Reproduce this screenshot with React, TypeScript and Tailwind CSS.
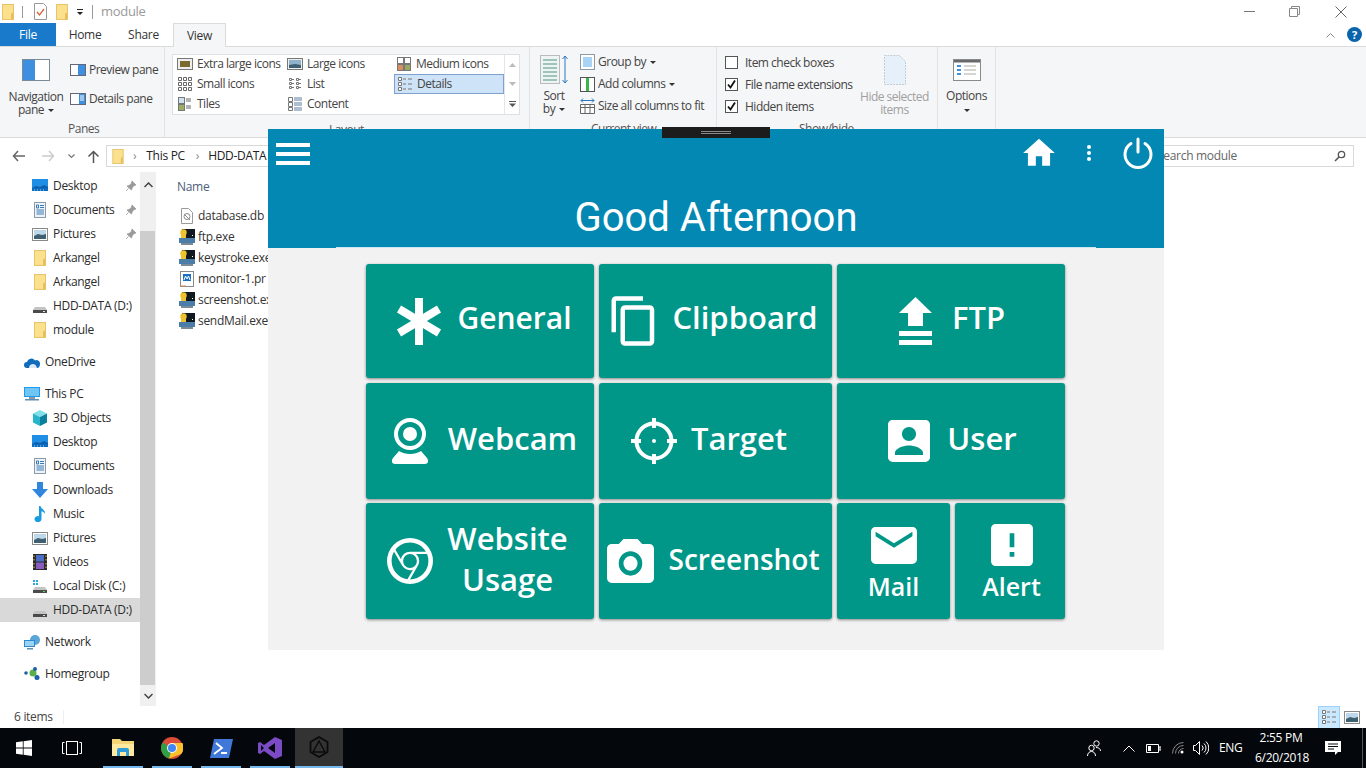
import React from "react";

const F = "[font-family:'Open_Sans','Noto_Sans',sans-serif]";

function Folder({ w = 12, h = 16 }: { w?: number; h?: number }) {
  return (
    <svg width={w} height={h} viewBox="0 0 12 16" className="shrink-0">
      <rect x="0.5" y="0.5" width="11" height="15" fill="#fbe08e" stroke="#e8c368" />
      <path d="M9 15V10l2-2v7z" fill="#e9bd58" />
    </svg>
  );
}
function Drive({ green = false }: { green?: boolean }) {
  return (
    <svg width="16" height="16" viewBox="0 0 16 16" className="shrink-0">
      {green && <path d="M1 2h2v2H1zM4 2h2v2H4zM1 5h2v2H1zM4 5h2v2H4z" fill="#27a3d8" />}
      <path d="M3 9h10l2 3H1z" fill="#c4c4c4" />
      <rect x="1" y="12" width="14" height="3" fill="#4a4a4a" />
      <rect x="11" y="13" width="2" height="1" fill={green ? "#5fd35f" : "#ddd"} />
    </svg>
  );
}
function Monitor() {
  return (
    <svg width="16" height="14" viewBox="0 0 16 14" className="shrink-0">
      <rect width="16" height="9" y="0" fill="#1f8fe6" />
      <path d="M0 9l4-2 4 1 4-2 4 2v1z" fill="#0d5ea8" />
      <rect y="9" width="16" height="3" fill="#0c6cc0" />
      <path d="M2 11h1M5 11h1M8 11h1M11 11h1" stroke="#9fd0f5" />
    </svg>
  );
}
function Doc() {
  return (
    <svg width="14" height="16" viewBox="0 0 14 16" className="shrink-0">
      <rect x="1.5" y="0.5" width="11" height="15" fill="#eef3f8" stroke="#8b9aa8" />
      <path d="M3.5 3h2v3h-2zM7 3.5h4M7 5.5h4M3.5 8h7.5M3.5 10h7.5M3.5 12h7.5" stroke="#3a7ab8" fill="none" />
    </svg>
  );
}
function Pics() {
  return (
    <svg width="16" height="13" viewBox="0 0 16 13" className="shrink-0">
      <rect x="0.5" y="0.5" width="15" height="12" fill="#fff" stroke="#8a8a8a" />
      <rect x="2" y="2" width="12" height="9" fill="#bcd8ea" />
      <path d="M2 8l4-2 4 1 4-1v5H2z" fill="#3f6070" />
    </svg>
  );
}
function Pin() {
  return (
    <svg width="12" height="12" viewBox="0 0 12 12">
      <path d="M7 1l4 4-2 .6-2 2.4-.5 2L2 6l2-.5L6.400 3.500z M3.500 8.500L1 11" fill="#9a9a9a" stroke="#9a9a9a" strokeWidth="0.8" />
    </svg>
  );
}
function Cube() {
  return (
    <svg width="16" height="16" viewBox="0 0 16 16" className="shrink-0">
      <path d="M8 0l7 3.500L8 7 1 3.500z" fill="#7fe0e8" />
      <path d="M1 3.500L8 7v9l-7-3.500z" fill="#26b5c9" />
      <path d="M15 3.500L8 7v9l7-3.500z" fill="#0c7f9c" />
    </svg>
  );
}
function Cloud() {
  return (
    <svg width="16" height="11" viewBox="0 0 16 11" className="shrink-0">
      <path d="M3 11a3 3 0 010-6 4.500 4.500 0 018-1.500A3.500 3.500 0 0116 7c0 2-1 4-3 4z" fill="#0f6cbd" />
      <path d="M5 11c0-3 2-4 4-4s3 1 4 4z" fill="#fff" opacity=".85" />
    </svg>
  );
}
function Pc() {
  return (
    <svg width="16" height="15" viewBox="0 0 16 15" className="shrink-0">
      <rect width="16" height="10" fill="#1f9cf0" />
      <rect x="1" y="1" width="14" height="8" fill="#6fc6f5" />
      <rect x="5" y="10" width="6" height="2" fill="#8a9aa6" />
      <rect x="1" y="12" width="14" height="1.500" fill="#5c8fb3" />
    </svg>
  );
}
function Down() {
  return (
    <svg width="16" height="16" viewBox="0 0 16 16" className="shrink-0">
      <path d="M5 0h6v7h5l-8 9-8-9h5z" fill="#2f86dc" />
    </svg>
  );
}
function Music() {
  return (
    <svg width="12" height="16" viewBox="0 0 12 16" className="shrink-0">
      <path d="M5 0h1.500c.5 3 5 3.500 4.500 8-1-2-2.500-2.500-3.500-2.800V13a3.500 3 0 11-2.500-2.800z" fill="#1a9be0" />
    </svg>
  );
}
function Video() {
  return (
    <svg width="14" height="16" viewBox="0 0 14 16" className="shrink-0">
      <rect width="14" height="16" fill="#2a2a2a" />
      <rect x="3" y="1" width="8" height="6.500" fill="#4b6fc6" />
      <rect x="3" y="8.500" width="8" height="6.500" fill="#8a5cc0" />
      <path d="M1 1.500v1.500M1 5v1.500M1 9v1.500M1 12.500v1.500M13 1.500v1.500M13 5v1.500M13 9v1.500M13 12.500v1.500" stroke="#d9c25a" />
    </svg>
  );
}
function Net() {
  return (
    <svg width="16" height="16" viewBox="0 0 16 16" className="shrink-0">
      <circle cx="11" cy="6" r="5" fill="#5aa5d8" />
      <rect x="0" y="6" width="11" height="7" fill="#2b8ad0" />
      <rect x="1" y="7" width="9" height="5" fill="#9bd3f3" />
      <rect x="3" y="14" width="6" height="1.500" fill="#5c8fb3" />
    </svg>
  );
}
function Home16() {
  return (
    <svg width="16" height="14" viewBox="0 0 16 14" className="shrink-0">
      <circle cx="2" cy="6" r="1.800" fill="#1a5fa8" />
      <circle cx="9" cy="6" r="3.500" fill="#5bb04a" />
      <circle cx="11" cy="2" r="2" fill="#1a5fa8" />
      <circle cx="13" cy="10.500" r="2.500" fill="#1a5fa8" />
    </svg>
  );
}
function DbIcon() {
  return (
    <svg width="14" height="16" viewBox="0 0 14 16" className="shrink-0">
      <path d="M1.500.5h7l4 4v11h-11z" fill="#fff" stroke="#9a9a9a" />
      <circle cx="7" cy="8.500" r="3" fill="none" stroke="#8a8a8a" />
      <path d="M4 6l6 6" stroke="#8a8a8a" />
    </svg>
  );
}
function Exe() {
  return (
    <svg width="16" height="16" viewBox="0 0 16 16" className="shrink-0">
      <rect x="3" y="0" width="13" height="10" fill="#101820" />
      <circle cx="4.500" cy="3.500" r="3.200" fill="#eec32e" />
      <rect x="2" y="4" width="5" height="5" fill="#eec32e" />
      <rect x="0" y="9" width="16" height="5" fill="#4a7ea8" />
      <rect x="2" y="14" width="12" height="2" fill="#7a8a96" />
      <path d="M13 6h1v1h-1z" fill="#fff" />
    </svg>
  );
}
function PrIcon() {
  return (
    <svg width="14" height="16" viewBox="0 0 14 16" className="shrink-0">
      <rect x="0.500" y="0.500" width="13" height="15" fill="#fff" stroke="#8a8a8a" />
      <rect x="3" y="3" width="8" height="7" fill="#1a6fc4" />
      <path d="M4 9l1.500-4L7 8l1.500-3L10 9" stroke="#fff" fill="none" />
      <path d="M0 15h6" stroke="#d08a60" />
    </svg>
  );
}

function NavRow({ icon, label, pin, sel, indent = 32, textX = 53, mt = 0 }: { icon: React.ReactNode; label: string; pin?: boolean; sel?: boolean; indent?: number; textX?: number; mt?: number }) {
  return (
    <div className={`relative flex h-6 items-center ${sel ? "bg-[#d9d9d9]" : ""}`} style={{ marginTop: mt }}>
      <span className="flex w-[16px] justify-center" style={{ marginLeft: indent }}>{icon}</span>
      <span className="whitespace-nowrap text-[12px] text-[#2b2b2b]" style={{ marginLeft: textX - indent - 16 }}>{label}</span>
      {pin && <span className="ml-auto mr-[3px] flex"><Pin /></span>}
    </div>
  );
}

function GalleryItem({ icon, label, sel, first }: { icon: React.ReactNode; label: string; sel?: boolean; first?: boolean }) {
  return (
    <div className={`flex h-5 items-center gap-[4px] ${first ? "pl-[4px]" : "pl-[2px]"} ${sel ? "border border-[#7da2ce] bg-[#cfe3f8]" : ""}`}>
      <span className="flex w-[16px] justify-center">{icon}</span>
      <span className="whitespace-nowrap text-[12px] text-[#444]">{label}</span>
    </div>
  );
}
function G({ k }: { k: number }) {
  const paths = [
    <g key="0"><rect x=".5" y="2.500" width="15" height="11" fill="#eee" stroke="#777" /><rect x="3" y="5" width="10" height="6" fill="#7a6a30" /></g>,
    <g key="1"><rect x=".5" y="2.500" width="15" height="11" fill="#eee" stroke="#777" /><rect x="2" y="4" width="12" height="8" fill="#8fb3cc" /><path d="M2 9l6-1 6 1v3H2z" fill="#3f6070" /></g>,
    <g key="2"><rect x="1.500" y="1.500" width="6" height="6" fill="#fff" stroke="#777" /><rect x="8.500" y="1.500" width="6" height="6" fill="#fff" stroke="#777" /><rect x="1.500" y="8.500" width="6" height="6" fill="#d99060" stroke="#777" /><rect x="8.500" y="8.500" width="6" height="6" fill="#9aa860" stroke="#777" /></g>,
    <path key="3" d="M1.500 1.500h3v3h-3zM6.500 1.500h3v3h-3zM11.500 1.500h3v3h-3zM1.500 6.500h3v3h-3zM6.500 6.500h3v3h-3zM11.500 6.500h3v3h-3zM1.500 11.500h3v3h-3zM6.500 11.500h3v3h-3zM11.500 11.500h3v3h-3z" fill="#fff" stroke="#666" />,
    <path key="4" d="M2.500 2.500h2v2h-2zM2.500 6.500h2v2h-2zM2.500 10.500h2v2h-2zM9.500 2.500h2v2h-2zM9.500 6.500h2v2h-2zM9.500 10.500h2v2h-2zM5 3.500h2M5 7.500h2M5 11.500h2M12 3.500h2M12 7.500h2M12 11.500h2" fill="#fff" stroke="#777" />,
    <path key="5" d="M1.500 1.500h3v3h-3zM1.500 6.500h3v3h-3zM1.500 11.500h3v3h-3zM6 3h3M6 8h3M6 13h3M11 3h4M11 8h4M11 13h4" fill="#fff" stroke="#777" />,
    <g key="6"><rect x="1.500" y="1.500" width="6" height="6" fill="#cfe0ef" stroke="#777" /><rect x="1.500" y="8.500" width="6" height="6" fill="#9ab060" stroke="#777" /><path d="M9 3h5M9 5h5M9 10h5M9 12h5" stroke="#666" /></g>,
    <g key="7"><path d="M1.500 1.500h4v4h-4zM1.500 6.500h4v4h-4zM1.500 11.500h4v3h-4z" fill="#fff" stroke="#777" /><path d="M7 2h8M7 4h8M7 7h8M7 9h8M7 12h8M7 14h8" stroke="#5a7da0" /></g>,
  ];
  return <svg width="16" height="16" viewBox="0 0 16 16">{paths[k]}</svg>;
}

function Check({ on }: { on?: boolean }) {
  return (
    <span className="flex h-[13px] w-[13px] items-center justify-center border border-[#555] bg-white">
      {on && (
        <svg width="11" height="11" viewBox="0 0 11 11"><path d="M2 5.500l2.500 3L9 1.500" fill="none" stroke="#111" strokeWidth="1.800" /></svg>
      )}
    </span>
  );
}

const Tri = () => <span className="ml-1 inline-block h-0 w-0 border-x-[3px] border-t-[3px] border-x-transparent border-t-[#333] align-middle" />;

function Tile({ children, cls = "justify-center" }: { children: React.ReactNode; cls?: string }) {
  return (
    <button className={`flex items-center rounded-[3px] bg-[#009688] font-semibold tracking-normal text-white shadow-[0_1px_3px_rgba(0,0,0,0.45)] ${cls}`}>
      {children}
    </button>
  );
}
const Lbl = ({ children, cls = "mb-[5px] text-[31px]" }: { children: React.ReactNode; cls?: string }) => (
  <span className={`whitespace-nowrap leading-[41px] ${cls}`}>{children}</span>
);

export default function App() {
  return (
    <div className={`relative flex h-[768px] w-[1366px] flex-col overflow-hidden bg-white ${F} tracking-[-0.3px]`}>
      {/* title bar */}
      <div className="flex h-[23px] items-center text-[13px]">
        <span className="ml-[2px]"><Folder /></span>
        <span className="ml-[8px] h-[12px] w-px bg-[#999]" />
        <span className="ml-[11px]">
          <svg width="13" height="17" viewBox="0 0 13 17"><path d="M.5.500h9l3 3v13H.5z" fill="#fff" stroke="#999" /><path d="M3 9l2.500 3L10 6" fill="none" stroke="#d9663a" strokeWidth="1.300" /></svg>
        </span>
        <span className="ml-[9px]"><Folder /></span>
        <span className="ml-[8px]">
          <svg width="8" height="8" viewBox="0 0 8 8"><path d="M1 1h6v1H1zM1 4h6L4 7z" fill="#222" /></svg>
        </span>
        <span className="ml-[8px] h-[14px] w-px bg-[#999]" />
        <span className="ml-[8px] pt-[1px] text-[#9a9a9a]">module</span>
        <div className="ml-auto flex items-center">
          <span className="h-px w-[11px] bg-[#777]" />
          <svg className="ml-[34px]" width="11" height="11" viewBox="0 0 11 11"><path d="M.5 2.500h8v8h-8zM2.500 2.500v-2h8v8h-2" fill="none" stroke="#888" /></svg>
          <svg className="ml-[35px] mr-[19px]" width="12" height="12" viewBox="0 0 12 12"><path d="M.5.500l11 11M11.500.500l-11 11" stroke="#666" /></svg>
        </div>
      </div>
      {/* tabs */}
      <div className="flex h-[23px] items-center text-[12px] text-[#333]">
        <div className="flex h-full w-[56px] items-center justify-center bg-[#1979ca] text-white">File</div>
        <div className="flex h-full w-[58px] items-center justify-center">Home</div>
        <div className="flex h-full w-[59px] items-center justify-center">Share</div>
        <div className="z-10 flex h-[24px] w-[53px] items-center justify-center self-start border border-b-0 border-[#dadbdc] bg-[#f5f6f7]">View</div>
        <div className="ml-auto mr-[4px] flex items-center gap-[12px]">
          <svg width="9" height="6" viewBox="0 0 9 6"><path d="M.5 5.500l4-4 4 4" fill="none" stroke="#888" /></svg>
          <span className="flex h-[15px] w-[15px] items-center justify-center rounded-full bg-[#0a64ad] text-[11px] font-bold leading-none text-white">?</span>
        </div>
      </div>
      {/* ribbon */}
      <div className="flex h-[92px] whitespace-nowrap border-y border-[#dadbdc] bg-[#f5f6f7] text-[12px] tracking-[-0.5px] text-[#444]">
        <div className="relative flex w-[165px] shrink-0 flex-col border-r border-[#e2e3e4]">
          <div className="flex h-[75px]">
            <div className="flex w-[68px] flex-col items-center pl-[4px] pt-[12px]">
              <svg width="28" height="22" viewBox="0 0 28 22"><rect x=".5" y=".5" width="27" height="21" fill="#fff" stroke="#7a8a96" /><rect x="1" y="1" width="12" height="20" fill="#3d8fe0" /></svg>
              <div className="mt-[9px] text-center leading-[13px]">Navigation<br />pane<Tri /></div>
            </div>
            <div className="flex flex-col gap-[13px] pl-[2px] pt-[15px]">
              <div className="flex items-center gap-[3px] leading-4">
                <svg width="16" height="12" viewBox="0 0 16 12"><rect x=".5" y=".5" width="15" height="11" fill="#fff" stroke="#667" /><rect x="8" y="1" width="7" height="10" fill="#3d8fe0" /></svg>
                <span>Preview pane</span>
              </div>
              <div className="flex items-center gap-[3px] leading-4">
                <svg width="16" height="12" viewBox="0 0 16 12"><rect x=".5" y=".5" width="15" height="11" fill="#fff" stroke="#667" /><rect x="9" y="1" width="6" height="10" fill="#3d8fe0" /><path d="M10 3h4M10 5h4M10 7h4" stroke="#fff" /></svg>
                <span>Details pane</span>
              </div>
            </div>
          </div>
          <div className="pl-[68px] leading-[16px] text-[#555]">Panes</div>
        </div>
        <div className="flex w-[365px] shrink-0 flex-col border-r border-[#e2e3e4] pl-[7px] pt-[7px]">
          <div className="flex h-[61px] w-[348px] border border-[#dfe0e1] bg-white">
            <div className="-mt-px grid flex-1 grid-cols-[112px_109px_110px] grid-rows-[20px_20px_20px]">
              <GalleryItem first icon={<G k={0} />} label="Extra large icons" />
              <GalleryItem icon={<G k={1} />} label="Large icons" />
              <GalleryItem icon={<G k={2} />} label="Medium icons" />
              <GalleryItem first icon={<G k={3} />} label="Small icons" />
              <GalleryItem icon={<G k={4} />} label="List" />
              <GalleryItem icon={<G k={5} />} label="Details" sel />
              <GalleryItem first icon={<G k={6} />} label="Tiles" />
              <GalleryItem icon={<G k={7} />} label="Content" />
            </div>
            <div className="flex w-[15px] flex-col items-center justify-around border-l border-[#e5e5e5] text-[#aaa]">
              <svg width="7" height="4" viewBox="0 0 7 4"><path d="M0 4l3.500-4L7 4z" fill="#bbb" /></svg>
              <svg width="7" height="4" viewBox="0 0 7 4"><path d="M0 0l3.500 4L7 0z" fill="#bbb" /></svg>
              <svg width="7" height="6" viewBox="0 0 7 6"><path d="M0 0h7v1H0zM0 2.500l3.500 3.500L7 2.500z" fill="#555" /></svg>
            </div>
          </div>
          <div className="mt-[7px] pl-[157px] leading-[16px] text-[#555]">Layout</div>
        </div>
        <div className="flex w-[187px] shrink-0 flex-col border-r border-[#e2e3e4]">
          <div className="flex h-[75px]">
            <div className="flex w-[48px] flex-col items-center pt-[8px]">
              <svg width="28" height="30" viewBox="0 0 28 30"><rect x=".5" y=".5" width="19" height="28" fill="#eef3f3" stroke="#bbb" /><path d="M3 5h14M3 9h14M3 13h14M3 17h14M3 21h14M3 25h14" stroke="#9cc4b8" strokeWidth="2" /><path d="M25 1v27M22.500 4L25 1l2.500 3M22.500 25l2.500 3 2.500-3" fill="none" stroke="#2a78c0" /></svg>
              <div className="mt-[4px] text-center leading-[13px]">Sort<br />by<Tri /></div>
            </div>
            <div className="flex flex-col gap-[6px] pl-[2px] pt-[7px]">
              <div className="flex h-[16px] items-center gap-[3px]"><svg width="15" height="16" viewBox="0 0 15 16"><rect x=".5" y=".5" width="14" height="15" fill="#fff" stroke="#8a9aa8" /><rect x="3" y="3" width="9" height="10" fill="#a9d3f5" /></svg><span>Group by<Tri /></span></div>
              <div className="flex h-[16px] items-center gap-[3px]"><svg width="15" height="16" viewBox="0 0 15 16"><rect x=".5" y="1.500" width="14" height="14" fill="#fff" stroke="#555" /><rect x="6" y="2" width="3" height="13" fill="#39b54a" /></svg><span>Add columns<Tri /></span></div>
              <div className="flex h-[16px] items-center gap-[3px]"><svg width="15" height="16" viewBox="0 0 15 16"><path d="M1 2.500h13M3 .5L1 2.500l2 2M12 .5l2 2-2 2" fill="none" stroke="#2a78c0" /><path d="M.5 6.500h14v9H.5zM.5 9.500h14M5 6.500v9M10 6.500v9" fill="#fff" stroke="#666" /></svg><span>Size all columns to fit</span></div>
            </div>
          </div>
          <div className="pl-[61px] leading-[16px] text-[#555]">Current view</div>
        </div>
        <div className="flex w-[221px] shrink-0 flex-col border-r border-[#e2e3e4]">
          <div className="flex h-[75px]">
            <div className="flex w-[135px] flex-col gap-[9px] pl-[8px] pt-[9px]">
              <div className="flex h-[13px] items-center gap-[7px]"><Check /><span>Item check boxes</span></div>
              <div className="flex h-[13px] items-center gap-[7px]"><Check on /><span>File name extensions</span></div>
              <div className="flex h-[13px] items-center gap-[7px]"><Check on /><span>Hidden items</span></div>
            </div>
            <div className="flex w-[85px] flex-col items-center pt-[8px] text-[#a0a0a0]">
              <svg width="22" height="30" viewBox="0 0 22 30"><path d="M.5.500h15l6 6v23H.5z" fill="#e6f0fb" stroke="#c4ccd4" strokeDasharray="2 1" /></svg>
              <div className="mt-[5px] text-center leading-[13px]">Hide selected<br />items</div>
            </div>
          </div>
          <div className="pl-[82px] leading-[16px] text-[#555]">Show/hide</div>
        </div>
        <div className="flex w-[58px] shrink-0 flex-col items-center border-r border-[#e2e3e4] pt-[12px]">
          <svg width="28" height="22" viewBox="0 0 28 22"><rect x=".5" y=".5" width="27" height="21" fill="#fff" stroke="#8a8a8a" /><rect x="1" y="1" width="26" height="2.500" fill="#6a6a6a" /><path d="M4 7h4M4 11h4M4 15h4" stroke="#3d8fe0" strokeWidth="2" /><path d="M11 7h12M11 11h12M11 15h12" stroke="#aaa" /></svg>
          <div className="mt-[8px] leading-[13px]">Options</div>
          <span className="mt-[7px] h-0 w-0 border-x-[3px] border-t-[3px] border-x-transparent border-t-[#333]" />
        </div>
      </div>
      {/* address bar */}
      <div className="flex h-[34px] items-center pt-[2px] text-[12px] text-[#222]">
        <svg className="ml-[12px]" width="14" height="12" viewBox="0 0 14 12"><path d="M13 6H2M6 1L1.500 6 6 11" fill="none" stroke="#666" strokeWidth="1.500" /></svg>
        <svg className="ml-[15px]" width="14" height="12" viewBox="0 0 14 12"><path d="M1 6h11M8 1l4.500 5L8 11" fill="none" stroke="#ccc" strokeWidth="1.500" /></svg>
        <svg className="ml-[13px]" width="7" height="5" viewBox="0 0 7 5"><path d="M.5.500l3 3 3-3" fill="none" stroke="#777" strokeWidth="1.200" /></svg>
        <svg className="ml-[12px]" width="13" height="13" viewBox="0 0 13 13"><path d="M6.500 13V2M1.500 6.500l5-5 5 5" fill="none" stroke="#555" strokeWidth="1.500" /></svg>
        <div className="ml-[6px] flex h-[22px] w-[1046px] items-center border border-[#d9d9d9] pl-[5px]">
          <Folder w={12} h={15} />
          <span className="ml-[9px] text-[#888]">›</span>
          <span className="ml-[10px]">This PC</span>
          <span className="ml-[11px] text-[#888]">›</span>
          <span className="ml-[9px]">HDD-DATA (D:)</span>
        </div>
        <div className="ml-[3px] flex h-[22px] w-[199px] items-center justify-between border border-[#d9d9d9] pl-[1px] pr-[7px] text-[#666]">
          <span>Search module</span>
          <svg width="12" height="12" viewBox="0 0 12 12"><circle cx="7.500" cy="4.500" r="3.200" fill="none" stroke="#555" strokeWidth="1.300" /><path d="M5 7l-4 4" stroke="#555" strokeWidth="1.600" /></svg>
        </div>
      </div>
      {/* main */}
      <div className="flex min-h-0 flex-1">
        <div className="w-[140px] shrink-0 pt-[2px]">
          <NavRow icon={<Monitor />} label="Desktop" pin />
          <NavRow icon={<Doc />} label="Documents" pin />
          <NavRow icon={<Pics />} label="Pictures" pin />
          <NavRow icon={<Folder />} label="Arkangel" />
          <NavRow icon={<Folder />} label="Arkangel" />
          <NavRow icon={<Drive />} label="HDD-DATA (D:)" />
          <NavRow icon={<Folder />} label="module" />
          <NavRow icon={<Cloud />} label="OneDrive" indent={24} textX={45} mt={8} />
          <NavRow icon={<Pc />} label="This PC" indent={24} textX={45} mt={8} />
          <NavRow icon={<Cube />} label="3D Objects" />
          <NavRow icon={<Monitor />} label="Desktop" />
          <NavRow icon={<Doc />} label="Documents" />
          <NavRow icon={<Down />} label="Downloads" />
          <NavRow icon={<Music />} label="Music" />
          <NavRow icon={<Pics />} label="Pictures" />
          <NavRow icon={<Video />} label="Videos" />
          <NavRow icon={<Drive green />} label="Local Disk (C:)" />
          <NavRow icon={<Drive />} label="HDD-DATA (D:)" sel />
          <NavRow icon={<Net />} label="Network" indent={24} textX={45} mt={8} />
          <NavRow icon={<Home16 />} label="Homegroup" indent={24} textX={45} mt={8} />
        </div>
        <div className="flex h-[534px] w-[16px] shrink-0 flex-col bg-[#f0f0f0]">
          <div className="flex h-[17px] items-center justify-center pt-[8px]"><svg width="9" height="6" viewBox="0 0 9 6"><path d="M.5 5l4-4 4 4" fill="none" stroke="#444" strokeWidth="1.500" /></svg></div>
          <div className="mt-[42px] h-[454px] w-[15px] bg-[#cdcdcd]" />
          <div className="flex flex-1 items-center justify-center"><svg width="9" height="6" viewBox="0 0 9 6"><path d="M.5 1l4 4 4-4" fill="none" stroke="#444" strokeWidth="1.500" /></svg></div>
        </div>
        <div className="flex-1 pl-[21px] pt-[7px] text-[12px] text-[#333]">
          <div className="mb-[10px] leading-[16px] text-[#4c607a]">Name</div>
          {[
            [<DbIcon key="a" />, "database.db"],
            [<Exe key="b" />, "ftp.exe"],
            [<Exe key="c" />, "keystroke.exe"],
            [<PrIcon key="d" />, "monitor-1.pr"],
            [<Exe key="e" />, "screenshot.exe"],
            [<Exe key="f" />, "sendMail.exe"],
          ].map(([ic, t], i) => (
            <div key={i} className="flex h-[21px] items-center gap-[3px] pl-[2px]">
              <span className="flex w-[16px] justify-center">{ic}</span>
              <span className="whitespace-nowrap">{t as string}</span>
            </div>
          ))}
        </div>
      </div>
      {/* status */}
      <div className="flex h-[22px] items-center text-[12px] text-[#444]">
        <span className="ml-[14px]">6 items</span>
        <span className="ml-[10px] h-[14px] w-px bg-[#eee]" />
        <div className="ml-auto mr-[6px] flex items-center gap-[4px]">
          <span className="flex h-[23px] w-[22px] items-center justify-center border border-[#99d1ff] bg-[#cce8ff]"><G k={5} /></span>
          <Pics />
        </div>
      </div>
      {/* taskbar */}
      <div className="relative z-20 flex h-[40px] items-stretch bg-[#04070b] text-white">
        <div className="flex w-[48px] items-center justify-center">
          <svg width="16" height="16" viewBox="0 0 16 16"><path d="M0 2.300L6.800 1.300V7.600H0zM7.600 1.200L16 0v7.600H7.600zM0 8.400H6.800V14.700L0 13.700zM7.600 8.400H16V16L7.600 14.800z" fill="#fff" /></svg>
        </div>
        <div className="flex w-[48px] items-center justify-center">
          <svg width="20" height="14" viewBox="0 0 20 14"><path d="M2.500 1.500h-2v11h2M17.500 1.500h2v11h-2" fill="none" stroke="#fff" /><rect x="4.500" y=".5" width="11" height="13" fill="none" stroke="#fff" /></svg>
        </div>
        <div className="ml-[7px] flex w-[40px] flex-col items-center justify-end">
          <svg className="mb-[8px]" width="22" height="20" viewBox="0 0 22 20"><path d="M0 1h8l2 2h12v15H0z" fill="#f3d477" /><path d="M0 6h22v12H0z" fill="#ffe9a0" /><path d="M5 18v-6a2 2 0 012-2h8a2 2 0 012 2v6h-3v-4H8v4z" fill="#2f9bd8" /></svg>
          <span className="h-[2px] w-full bg-[#76b9ed]" />
        </div>
        <div className="ml-[9px] flex w-[40px] flex-col items-center justify-end">
          <svg className="mb-[7px]" width="22" height="22" viewBox="0 0 22 22"><circle cx="11" cy="11" r="11" fill="#dd4b39" /><path d="M11 11L1.500 5.500A11 11 0 000 11a11 11 0 008 10.600z" fill="#2f9e44" /><path d="M11 6h10.500a11 11 0 01-1.300 11L8 21.600 11 11z" fill="#fbc02d" /><circle cx="11" cy="11" r="5" fill="#fff" /><circle cx="11" cy="11" r="4" fill="#4285f4" /></svg>
          <span className="h-[2px] w-full bg-[#76b9ed]" />
        </div>
        <div className="ml-[9px] flex w-[40px] flex-col items-center justify-end">
          <svg className="mb-[8px]" width="23" height="19" viewBox="0 0 23 19"><path d="M4 0h19l-4 19H0z" fill="#3f78d8" /><path d="M6 4l6 5-8 6M11 14h6" fill="none" stroke="#fff" strokeWidth="1.800" /></svg>
          <span className="h-[2px] w-full bg-[#76b9ed]" />
        </div>
        <div className="ml-[9px] flex w-[40px] flex-col items-center justify-end">
          <svg className="mb-[7px]" width="24" height="22" viewBox="0 0 24 22"><path d="M17 0l7 3v16l-7 3L6 14l-4 3-2-1V6l2-1 4 3z" fill="#7a4bc4" /><path d="M17 6v10l-7-5zM3 8v6l3-3z" fill="#04070b" /></svg>
          <span className="h-[2px] w-full bg-[#76b9ed]" />
        </div>
        <div className="ml-[5px] flex w-[48px] flex-col items-center justify-end bg-[#333]">
          <svg className="mb-[8px]" width="20" height="22" viewBox="0 0 20 22"><path d="M10 1l8.500 5v10L10 21l-8.500-5V6z" fill="none" stroke="#0b0b0b" strokeWidth="1.800" /><path d="M10 5l6 11H4z" fill="none" stroke="#0b0b0b" strokeWidth="1.500" /></svg>
          <span className="h-[2px] w-full bg-[#76b9ed]" />
        </div>
        <div className="ml-auto flex items-center text-[12px]">
          <svg width="14" height="16" viewBox="0 0 14 16"><circle cx="4.500" cy="8" r="2.700" fill="none" stroke="#fff" /><path d="M.5 16c0-3 2-4.500 4-4.500s4 1.500 4 4.500" fill="none" stroke="#fff" /><circle cx="9.500" cy="3.500" r="2.700" fill="none" stroke="#fff" /><path d="M9 7.500c2.500 0 4.500 1 4.500 3.500" fill="none" stroke="#fff" /></svg>
          <svg className="ml-[22px]" width="12" height="7" viewBox="0 0 12 7"><path d="M.5 6.500L6 1l5.500 5.500" fill="none" stroke="#fff" /></svg>
          <svg className="ml-[11px]" width="15" height="9" viewBox="0 0 15 9"><path d="M.5.500h12v8H.5zM13 3h2v3h-2z" fill="none" stroke="#fff" /><rect x="2" y="2" width="3" height="5" fill="#fff" /></svg>
          <svg className="ml-[11px]" width="12" height="12" viewBox="0 0 12 12"><path d="M.5 11.500a11 11 0 0111-11M3.500 11.500a8 8 0 018-8M6.500 11.500a5 5 0 015-5" fill="none" stroke="#888" /><circle cx="10" cy="10" r="1.500" fill="#fff" /></svg>
          <svg className="ml-[9px]" width="16" height="14" viewBox="0 0 16 14"><path d="M.5 4.500h2l4-4v13l-4-4h-2z" fill="none" stroke="#fff" /><path d="M9 4.500a3.500 3.500 0 010 5M11 2.500a6 6 0 010 9M13 .5a9 9 0 010 13" fill="none" stroke="#fff" /></svg>
          <span className="ml-[10px] w-[23px] whitespace-nowrap text-center">ENG</span>
          <div className="ml-[13px] w-[52px] text-center text-[12px] leading-[20px]">2:55 PM<br /><span className="whitespace-nowrap">6/20/2018</span></div>
          <svg className="ml-[18px]" width="16" height="15" viewBox="0 0 16 15"><path d="M0 0h16v11h-3l-3 3v-3H0z" fill="#fff" /><path d="M3 3h10M3 5.500h10M3 8h6" stroke="#04070b" /></svg>
          <span className="ml-[21px] h-full w-px bg-[#555]" />
          <span className="w-[3px]" />
        </div>
      </div>

      {/* application window */}
      <div className="absolute left-[268px] top-[129px] z-10 flex h-[521px] w-[896px] flex-col bg-[#f2f2f2]">
        <div className="absolute left-[394px] top-[-2px] flex h-[11px] w-[108px] items-center justify-center bg-[#1c1c1c]">
          <span className="h-[3px] w-[30px] border-y border-[#888]" />
        </div>
        <header className="flex h-[119px] flex-col bg-[#0288b2] text-white">
          <div className="flex h-[48px] items-center pl-[8px] pr-[10px]">
            <div className="mt-[2px] flex w-[34px] flex-col gap-[5px]">
              <span className="h-[4px] bg-white" /><span className="h-[4px] bg-white" /><span className="h-[4px] bg-white" />
            </div>
            <svg className="ml-auto" width="38" height="38" viewBox="0 0 24 24" fill="#fff"><path d="M10 20v-6h4v6h5v-8h3L12 3 2 12h3v8z" /></svg>
            <svg className="ml-[28px]" width="6" height="18" viewBox="0 0 6 18" fill="#fff"><circle cx="3" cy="3" r="2" /><circle cx="3" cy="9" r="2" /><circle cx="3" cy="15" r="2" /></svg>
            <svg className="ml-[30px]" width="32" height="32" viewBox="0 0 32 32" fill="none" stroke="#fff" strokeWidth="3" strokeLinecap="round"><path d="M16 2v13M9 6.500a13 13 0 1014 0" /></svg>
          </div>
          <div className="flex flex-1 items-end justify-center pb-[6px]">
            <h1 className="text-center [font-family:Roboto,sans-serif] text-[40px] font-normal leading-[46px] tracking-normal">Good Afternoon</h1>
          </div>
          <div className="mx-auto h-px w-[760px] bg-[#cfe7ef]" />
        </header>
        <div className="flex-1 pl-[98px] pt-[16px]">
          <div className="flex w-[699px] flex-col">
            <div className="grid h-[114px] grid-cols-[228px_233px_228px] gap-x-[5px]">
              <Tile cls="justify-center pl-[8px]">
                <svg className="mr-[15px]" width="46" height="47" viewBox="0 0 46 47" stroke="#fff" strokeWidth="8"><path d="M23 0v47M3 11l40 24M3 35l40-24" /></svg>
                <Lbl cls="mb-[7px] text-[30px]">General</Lbl>
              </Tile>
              <Tile cls="justify-center pr-[4px]">
                <svg className="mr-[13px]" width="50" height="54" viewBox="1 0 22 24" fill="#fff"><path d="M16 1H4c-1.100 0-2 .9-2 2v14h2V3h12V1zm3 4H8c-1.100 0-2 .9-2 2v14c0 1.100.9 2 2 2h11c1.100 0 2-.9 2-2V7c0-1.100-.9-2-2-2zm0 16H8V7h11v14z" /></svg>
                <Lbl cls="mb-[7px] text-[31px]">Clipboard</Lbl>
              </Tile>
              <Tile cls="justify-center pl-[2px]">
                <svg className="mr-[20px]" width="33" height="48" viewBox="0 0 33 48" fill="#fff"><path d="M16.500 0L33 16h-9v13H9V16H0z" /><rect y="34" width="33" height="5" /><rect y="43" width="33" height="5" /></svg>
                <Lbl cls="mb-[7px] text-[31px]">FTP</Lbl>
              </Tile>
            </div>
            <div className="mt-[5px] grid h-[116px] grid-cols-[228px_233px_228px] gap-x-[5px]">
              <Tile cls="justify-center pl-[8px]">
                <svg className="mr-[19px]" width="38" height="46" viewBox="0 0 38 46" fill="none"><circle cx="19" cy="16" r="14" stroke="#fff" strokeWidth="4" /><circle cx="19" cy="16" r="7" fill="#fff" /><path d="M8 33c3 2 7 3 11 3s8-1 11-3l6 7c2 3 1 6-2 6H4c-3 0-4-3-2-6z" fill="#fff" /></svg>
                <Lbl>Webcam</Lbl>
              </Tile>
              <Tile cls="justify-center pr-[13px]">
                <svg className="mr-[14px]" width="46" height="46" viewBox="0 0 46 46" fill="none" stroke="#fff" strokeWidth="4"><circle cx="23" cy="23" r="17.500" /><path d="M23 0v10M23 36v10M0 23h10M36 23h10" /><circle cx="23" cy="23" r="2" fill="#fff" stroke="none" /></svg>
                <Lbl>Target</Lbl>
              </Tile>
              <Tile cls="justify-center pl-[3px]">
                <svg className="mr-[17px]" width="42" height="42" viewBox="3 3 18 18" fill="#fff"><path d="M3 5v14c0 1.100.89 2 2 2h14c1.100 0 2-.9 2-2V5c0-1.100-.9-2-2-2H5c-1.110 0-2 .9-2 2zm12 4c0 1.660-1.340 3-3 3s-3-1.340-3-3 1.340-3 3-3 3 1.340 3 3zm-9 8c0-2 4-3.100 6-3.100s6 1.100 6 3.100v1H6v-1z" /></svg>
                <Lbl>User</Lbl>
              </Tile>
            </div>
            <div className="mt-[4px] grid h-[116px] grid-cols-[228px_233px_113px_110px] gap-x-[5px]">
              <Tile cls="justify-center pr-[5px]">
                <svg className="mr-[14px]" width="46" height="46" viewBox="2 2 20 20" fill="#fff"><path d="M12,20L15.460,14H15.450C15.790,13.400 16,12.730 16,12C16,10.800 15.460,9.730 14.620,9H19.410C19.790,9.930 20,10.940 20,12A8,8 0 0,1 12,20M4,12C4,10.540 4.390,9.180 5.070,8L8.540,14H8.550C9.240,15.190 10.530,16 12,16C12.450,16 12.880,15.910 13.290,15.770L10.890,19.910C7,19.370 4,16.040 4,12M15,12A3,3 0 0,1 12,15A3,3 0 0,1 9,12A3,3 0 0,1 12,9A3,3 0 0,1 15,12M12,4C14.960,4 17.540,5.610 18.920,8H12C10.060,8 8.440,9.380 8.080,11.220L5.700,7.080C7.160,5.210 9.440,4 12,4M12,2A10,10 0 0,0 2,12A10,10 0 0,0 12,22A10,10 0 0,0 22,12A10,10 0 0,0 12,2Z" /></svg>
                <span className="mb-[5px] whitespace-nowrap text-center text-[31px] leading-[41px]">Website<br />Usage</span>
              </Tile>
              <Tile cls="justify-center pr-[4px]">
                <svg className="mr-[14px]" width="47" height="44" viewBox="2 2 20 18" fill="#fff" preserveAspectRatio="none"><path d="M4,4H7L9,2H15L17,4H20A2,2 0 0,1 22,6V18A2,2 0 0,1 20,20H4A2,2 0 0,1 2,18V6A2,2 0 0,1 4,4M12,7A5,5 0 0,0 7,12A5,5 0 0,0 12,17A5,5 0 0,0 17,12A5,5 0 0,0 12,7M12,9A3,3 0 0,1 15,12A3,3 0 0,1 12,15A3,3 0 0,1 9,12A3,3 0 0,1 12,9Z" /></svg>
                <Lbl cls="mb-[4px] text-[28px]">Screenshot</Lbl>
              </Tile>
              <Tile cls="flex-col justify-start pt-[24px]">
                <svg width="46" height="37" viewBox="2 4 20 16" fill="#fff"><path d="M20 4H4c-1.100 0-1.990.9-1.990 2L2 18c0 1.100.9 2 2 2h16c1.100 0 2-.9 2-2V6c0-1.100-.9-2-2-2zm0 4l-8 5-8-5V6l8 5 8-5v2z" /></svg>
                <span className="mt-[2px] text-[25px] leading-[41px]">Mail</span>
              </Tile>
              <Tile cls="flex-col justify-start pl-[3px] pt-[21px]">
                <svg width="42" height="42" viewBox="3 3 18 18" fill="#fff"><path d="M5,3H19A2,2 0 0,1 21,5V19A2,2 0 0,1 19,21H5A2,2 0 0,1 3,19V5A2,2 0 0,1 5,3M13,13V7H11V13H13M13,17V15H11V17H13Z" /></svg>
                <span className="text-[25px] leading-[41px]">Alert</span>
              </Tile>
            </div>
          </div>
        </div>
      </div>
    </div>
  );
}
